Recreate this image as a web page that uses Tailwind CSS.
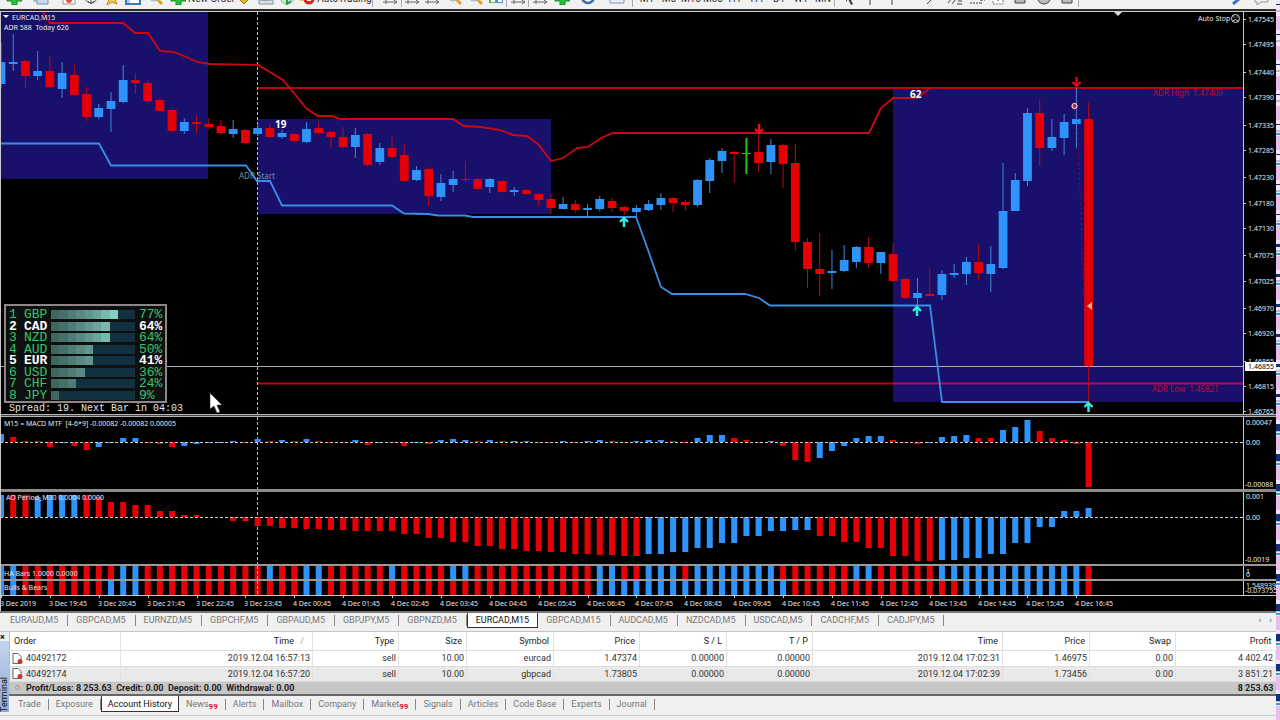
<!DOCTYPE html>
<html lang="en">
  <head>
    <meta charset="UTF-8" />
    <meta name="viewport" content="width=device-width, initial-scale=1.0" />
    <title>EURCAD,M15</title>
    <script src="https://cdn.jsdelivr.net/npm/@tailwindcss/browser@4"></script>
  </head>
  <body class="bg-[#f0f0f0] font-['Roboto','Noto_Sans',sans-serif] text-[9px] leading-3 text-[#333]">
    <div class="flex min-h-screen">
      <div class="flex min-w-0 flex-1 flex-col">
        <!-- toolbar, scrolled so that only its lower edge shows -->
        <header class="flex h-[9px] flex-col justify-end overflow-hidden bg-[#f1f1f2]">
          <div id="toolbar" class="flex h-6 shrink-0 items-center text-[10px] text-[#333]"></div>
        </header>
        <div class="h-[2px] bg-[#2c2c2c]"></div>

        <main class="border-l border-[#c8c8c8] bg-black">
          <section class="flex border-t border-[#c8c8c8]">
            <div class="relative min-w-0 flex-1 border-r border-[#c8c8c8]">
              <svg class="block h-[402px] w-full" role="img" aria-label="EURCAD price chart">
                <g id="price" transform="translate(-1,-12)"></g>
              </svg>
              <div class="absolute top-[292px] left-[3px] w-[163px] border-2 border-[#8e8688] bg-[#0e1010] px-[3px] pt-[3px] font-['Liberation_Mono',monospace] text-[13px] leading-[11px]">
                <div id="strength" class="grid h-[92px] grid-rows-8 items-center"></div>
              </div>
            </div>
            <svg class="block h-[402px] w-8 shrink-0">
              <g id="priceAxis" transform="translate(0,-12)"></g>
            </svg>
          </section>
          <div class="h-[3px] border-y border-[#b4b4b4] bg-[#444]"></div>

          <section class="flex">
            <svg class="block h-[72px] min-w-0 flex-1 border-r border-[#c8c8c8]">
              <g id="macd" transform="translate(-1,-417)"></g>
            </svg>
            <svg class="block h-[72px] w-8 shrink-0">
              <g id="macdAxis" transform="translate(0,-417)"></g>
            </svg>
          </section>
          <div class="h-[3px] bg-[#8c8c8c]"></div>

          <section class="flex">
            <svg class="block h-[72px] min-w-0 flex-1 border-r border-[#c8c8c8]">
              <g id="ao" transform="translate(-1,-492)"></g>
            </svg>
            <svg class="block h-[72px] w-8 shrink-0">
              <g id="aoAxis" transform="translate(0,-492)"></g>
            </svg>
          </section>
          <div class="h-[2px] bg-[#999]"></div>

          <section class="flex">
            <svg class="block h-[13px] min-w-0 flex-1 border-r border-[#c8c8c8]">
              <g id="ha" transform="translate(-1,-566)"></g>
            </svg>
            <svg class="block h-[13px] w-8 shrink-0">
              <g id="haAxis" transform="translate(0,-566)"></g>
            </svg>
          </section>
          <div class="h-[2px] bg-[#999]"></div>

          <section class="flex">
            <svg class="block h-[14px] min-w-0 flex-1 border-r border-[#c8c8c8]">
              <g id="bulls" transform="translate(-1,-581)"></g>
            </svg>
            <svg class="block h-[14px] w-8 shrink-0">
              <g id="bullsAxis" transform="translate(0,-581)"></g>
            </svg>
          </section>
          <svg class="block h-4 w-full">
            <g id="dates" transform="translate(-1,-595)"></g>
          </svg>
        </main>

        <nav class="flex h-[17px] border-t-2 border-[#777] bg-[#f0f0f0] pl-[2px] text-[#777]" aria-label="Charts">
          <div id="chartTabs" class="flex h-[15px] items-center"></div>
          <div class="ml-auto flex items-center gap-2 pr-1 text-[#666]">
            <button aria-label="Scroll left" class="leading-none">‹</button>
            <button aria-label="Scroll right" class="leading-none">›</button>
          </div>
        </nav>
        <div class="h-[4px] border-b border-[#c4c4c4] bg-[#f0f0f0]"></div>

        <section class="flex">
          <div class="flex w-[9px] shrink-0 flex-col bg-[#f0f0f0]">
            <button aria-label="Close terminal" class="h-[9px] text-left text-[9px] leading-[8px] font-bold text-black">×</button>
            <div class="flex flex-1 items-end overflow-hidden bg-linear-to-b from-[#c3d4ec] to-[#8fabd4]">
              <span class="rotate-180 text-[9px] leading-[8px] text-[#111] [writing-mode:vertical-rl]">Terminal</span>
            </div>
          </div>
          <div class="min-w-0 flex-1">
            <table class="w-full table-fixed border-collapse border-l border-[#bbb] bg-white text-right">
              <colgroup>
                <col class="w-[111px]" />
                <col class="w-[192px]" />
                <col class="w-[86px]" />
                <col class="w-[68px]" />
                <col class="w-[87px]" />
                <col class="w-[86px]" />
                <col class="w-[87px]" />
                <col class="w-[86px]" />
                <col class="w-[190px]" />
                <col class="w-[87px]" />
                <col class="w-[86px]" />
                <col />
              </colgroup>
              <thead>
                <tr class="h-[18px] border-b border-[#ddd] text-[#222]">
                  <th class="border-r border-[#e2e2e2] pl-1 text-left font-normal">Order</th>
                  <th class="border-r border-[#e2e2e2] pr-2 font-normal">Time <span class="pl-1 text-[#aaa]">/</span></th>
                  <th class="border-r border-[#e2e2e2] pr-1 font-normal">Type</th>
                  <th class="border-r border-[#e2e2e2] pr-1 font-normal">Size</th>
                  <th class="border-r border-[#e2e2e2] pr-1 font-normal">Symbol</th>
                  <th class="border-r border-[#e2e2e2] pr-1 font-normal">Price</th>
                  <th class="border-r border-[#e2e2e2] pr-1 font-normal">S / L</th>
                  <th class="border-r border-[#e2e2e2] pr-1 font-normal">T / P</th>
                  <th class="border-r border-[#e2e2e2] pr-1 font-normal">Time</th>
                  <th class="border-r border-[#e2e2e2] pr-1 font-normal">Price</th>
                  <th class="border-r border-[#e2e2e2] pr-1 font-normal">Swap</th>
                  <th class="pr-1 font-normal">Profit</th>
                </tr>
              </thead>
              <tbody id="orders"></tbody>
              <tfoot>
                <tr class="h-[14px] border-b-2 border-[#666] bg-[#c6c6c6] font-bold text-[#222]">
                  <td colspan="11" class="text-left">
                    <div class="flex items-center gap-[6px] pl-[5px]">
                      <span class="size-[5px] rounded-full border border-[#999]"></span>
                      <span class="whitespace-pre">Profit/Loss: 8 253.63  Credit: 0.00  Deposit: 0.00  Withdrawal: 0.00</span>
                    </div>
                  </td>
                  <td class="pr-[2px]">8 253.63</td>
                </tr>
              </tfoot>
            </table>
            <nav id="terminalTabs" class="flex h-4 items-center bg-[#f0f0f0] pl-[2px] text-[#777]" aria-label="Terminal"></nav>
          </div>
        </section>
        <footer class="mt-[3px] flex-1 border-t border-[#c8c8c8] bg-[#f0f0f0]"></footer>
      </div>
      <svg class="block w-1 shrink-0 self-stretch bg-[#f3e4f6]" aria-hidden="true">
        <g id="edge"></g>
      </svg>
    </div>

    <script>
      const RED = "#e60006";
      const BLUE = "#2e93fb";
      const STEP = 12.22;
      const x = (i) => 1 + STEP * i;
      const el = (id) => document.getElementById(id);

      const rect = (x, y, w, h, fill) =>
        `<rect x="${x}" y="${y}" width="${w}" height="${h}" fill="${fill}"/>`;
      const line = (x1, y1, x2, y2, color, width = 1, dash = "") =>
        `<line x1="${x1}" y1="${y1}" x2="${x2}" y2="${y2}" stroke="${color}" stroke-width="${width}" stroke-dasharray="${dash}"/>`;
      const label = (x, y, text, fill = "#e8e8e8", size = 7, weight = 400) =>
        `<text x="${x}" y="${y}" fill="${fill}" font-family="Noto Sans, sans-serif" font-size="${size}" font-weight="${weight}" xml:space="preserve">${text}</text>`;
      const dayLine = (y1, y2) => line(257.5, y1, 257.5, y2, "#bbb", 1, "3 2");
      const zeroLine = (y) => line(0, y, 3000, y, "#ccc", 1, "3 2");

      // colour, body top, body bottom, wick top, wick bottom
      const candles = [
        ["b", 62, 84, 43, 88], ["b", 62, 64, 34, 71], ["r", 61, 76, 60, 88],
        ["b", 71, 76, 51, 80], ["r", 71, 87, 56, 88], ["b", 73, 89, 62, 98],
        ["r", 75, 95, 64, 96], ["r", 94, 117, 87, 121], ["b", 108, 117, 104, 119],
        ["b", 101, 109, 92, 132], ["b", 80, 102, 65, 103], ["r", 80, 83, 73, 94],
        ["r", 83, 101, 80, 103], ["r", 100, 111, 98, 112], ["r", 110, 131, 109, 133],
        ["b", 122, 131, 118, 134], ["r", 122, 124, 115, 133], ["r", 124, 127, 118, 129],
        ["r", 126, 133, 120, 135], ["b", 129, 134, 120, 138], ["r", 130, 143, 129, 144],
        ["b", 128, 134, 124, 136], ["r", 128, 137, 123, 138], ["b", 133, 137, 130, 139],
        ["r", 134, 141, 133, 143], ["b", 129, 142, 122, 143], ["r", 128, 133, 121, 135],
        ["r", 132, 137, 131, 148], ["r", 137, 147, 127, 149], ["b", 135, 147, 128, 158],
        ["r", 134, 165, 133, 166], ["b", 148, 162, 143, 165], ["r", 148, 157, 136, 158],
        ["r", 155, 181, 144, 182], ["b", 170, 180, 166, 181], ["r", 169, 196, 167, 206],
        ["b", 183, 197, 174, 201], ["b", 179, 185, 171, 192], ["r", 179, 180, 161, 182],
        ["r", 179, 189, 178, 190], ["b", 179, 187, 178, 193], ["r", 181, 192, 180, 193],
        ["b", 190, 192, 187, 196], ["r", 190, 194, 189, 195], ["r", 194, 200, 193, 206],
        ["r", 199, 208, 194, 214], ["b", 204, 209, 197, 209], ["r", 204, 210, 200, 213],
        ["b", 208, 210, 204, 216], ["b", 199, 209, 196, 211], ["r", 201, 208, 198, 212],
        ["r", 207, 211, 206, 215], ["b", 208, 212, 205, 217], ["b", 204, 210, 200, 211],
        ["b", 198, 205, 193, 210], ["r", 198, 203, 197, 212], ["r", 202, 205, 200, 211],
        ["b", 180, 205, 179, 207], ["b", 160, 181, 158, 193], ["b", 151, 161, 148, 173],
        ["r", 152, 154, 151, 183], ["g", 153, 154, 138, 174], ["r", 152, 163, 134, 172],
        ["b", 145, 162, 139, 174], ["r", 145, 164, 144, 188], ["r", 163, 242, 144, 251],
        ["r", 242, 269, 238, 288], ["r", 269, 274, 233, 296], ["b", 271, 273, 250, 289],
        ["b", 260, 271, 245, 272], ["b", 247, 262, 246, 268], ["r", 247, 263, 237, 268],
        ["b", 252, 263, 252, 274], ["r", 254, 281, 243, 282], ["r", 279, 298, 278, 299],
        ["b", 293, 298, 278, 305], ["r", 294, 296, 268, 296], ["b", 274, 295, 270, 300],
        ["b", 273, 275, 264, 278], ["b", 262, 274, 257, 285], ["r", 262, 273, 244, 280],
        ["b", 264, 274, 246, 292], ["b", 211, 268, 163, 269], ["b", 180, 211, 173, 211],
        ["b", 113, 181, 108, 186], ["r", 113, 148, 99, 166], ["b", 137, 148, 119, 151],
        ["b", 122, 138, 114, 155], ["b", 119, 124, 88, 148], ["r", 119, 366, 103, 402],
      ];
      const tone = { r: RED, b: BLUE, g: "#1fc21f" };

      const upper =
        "43,12 50,23 123,23 135,33 148,33 160,51 173,52 184,56 197,62 210,64 258,65 283,80 307,109 318,116 331,116 341,119 453,119 464,126 481,127 500,130 513,135 527,136 538,144 551,161 563,158 577,148 588,147 601,138 613,133 869,133 881,108 893,98 917,98 930,88";
      const lower =
        "1,143.5 99,143.5 111,165.5 246,165.5 257,181 270,181 282,205.5 392,205.5 404,213.5 428,214 438,215.5 465,215.5 473,217 636,217 648,250 661,287 672,294 745,294 759,298 770,305.5 930,305.5 942,402 1089,402";

      const arrow = (cx, tip, dir, color) =>
        `<path d="M${cx} ${tip + dir * 10}V${tip + dir}M${cx - 4} ${tip + dir * 5}L${cx} ${tip + dir}L${cx + 4} ${tip + dir * 5}" stroke="${color}" stroke-width="2.4" fill="none"/>`;

      function drawPrice() {
        let out =
          rect(1, 12, 207, 167, "#18106a") +
          rect(258, 119, 293, 95, "#18106a") +
          rect(893, 87, 2000, 315, "#18106a") +
          dayLine(12, 414) +
          line(0, 366.5, 3000, 366.5, "#a9a9b4") +
          line(258, 88, 3000, 88, "#c00010", 2) +
          line(258, 383.5, 893, 383.5, "#c00010", 2) +
          line(893, 383.5, 3000, 383.5, "#b8085c", 2) +
          `<polyline points="${upper}" fill="none" stroke="#cc0810" stroke-width="1.8"/>` +
          `<polyline points="${lower}" fill="none" stroke="#3a8ee6" stroke-width="1.8"/>`;
        candles.forEach(([c, top, bottom, high, low], i) => {
          const wick = c === "g" ? tone.g : c === "r" ? "#b80a14" : "#3f88d8";
          out += line(x(i), high, x(i), low, wick, c === "g" ? 2 : 1);
          out += rect(x(i) - 4.4, top, 8.8, bottom - top, tone[c]);
        });
        out += line(1077, 108, 1084, 300, "#701050", 1, "2 3");
        out += arrow(759, 134, -1, "#f01018") + arrow(1076.5, 87, -1, "#e00a14");
        out += arrow(624, 217, 1, "#30f0dc") + arrow(917, 306, 1, "#30f0dc") + arrow(1088.5, 402, 1, "#30f0dc");
        out += `<circle cx="1074.500" cy="106" r="2.600" fill="#c02040" stroke="#fff"/>`;
        out += `<path d="M1087 306l5-4v8z" fill="#f0b090"/>`;
        out += `<path d="M1114 12h8l-4 4z" fill="#ddd"/>`;
        out += `<path d="M3 15h6l-3 3z" fill="#fff"/>`;
        out += label(12, 20, "EURCAD,M15") + label(4, 30, "ADR 588  Today 626");
        out += label(239, 179, "ADR Start", "#6d9a96", 8);
        out += label(275, 128, "19", "#fff", 10, 700) + label(910, 98, "62", "#fff", 10, 700);
        out += label(1153, 96, "ADR High  1.47409", "#c00a30", 8) + label(1152, 392, "ADR Low  1.46821", "#c00a30", 8);
        out += label(1198, 21, "Auto Stop");
        out += `<g fill="none" stroke="#ddd"><circle cx="1235.500" cy="18.500" r="4"/><path d="M1233 21q2.500-3 5 0M1233.500 17h1M1236.500 17h1"/></g>`;
        out += `<text x="9" y="411" fill="#e4e4e4" font-family="Liberation Mono, monospace" font-size="10">Spread: 19. Next Bar in 04:03</text>`;
        out += `<path d="M210 393v16l4-3 3 7 3-1-3-7h5z" fill="#fff" stroke="#222" stroke-width=".5"/>`;
        el("price").innerHTML = out;
      }

      const prices = [
        [19, "1.47545"], [44, "1.47495"], [72, "1.47440"], [97, "1.47390"],
        [125, "1.47335"], [150, "1.47285"], [177, "1.47230"], [203, "1.47180"],
        [228, "1.47130"], [255, "1.47075"], [281, "1.47025"], [308, "1.46970"],
        [333, "1.46920"], [361, "1.46865"], [386, "1.46815"], [411, "1.46765"],
      ];

      function drawPriceAxis() {
        el("priceAxis").innerHTML =
          prices.map(([y, t]) => line(0, y + 0.5, 2, y + 0.5, "#ccc") + label(4, y + 3, t)).join("") +
          rect(1, 362, 31, 9, "#fff") +
          label(4, 369, "1.46855", "#000");
      }

      // height above (+) or below (-) the zero line
      const macd = [
        "b8", "r5", "r1", "r1", "r-5", "b-1", "r-4", "r-8", "b-5", "b-1", "b4", "b4",
        "r-1", "r-2", "r-5", "b-4", "b-2", "b-1", "b-1", "b1", "r-1", "b3", "r1", "b2",
        "r1", "b3", "r1", "r-1", "r-1", "b2", "r-3", "b-1", "r-1", "r-4", "b-1", "r-2",
        "b2", "b3", "b2", "r1", "b2", "r1", "b1", "b1", "r-1", "r-1", "b1", "r-1",
        "b1", "b2", "r1", "r-1", "b1", "b2", "b2", "r1", "r-1", "b4", "b7", "b7",
        "r4", "r2", "r-1", "b1", "r-4", "r-18", "r-20", "b-16", "b-9", "b-4", "b4", "b6",
        "b6", "r2", "r-1", "r-2", "b-1", "b5", "b6", "b7", "r4", "r4", "b12", "b15",
        "b22", "r11", "r4", "r2", "r-2", "r-45",
      ];
      const ao = [
        "b22", "r22", "r22", "b20", "b22", "b22", "b22", "r22", "r20", "r15", "r15", "r12",
        "r12", "r6", "r6", "r2", "r2", "r0", "r0", "r-4", "r-4", "r-9", "r-9", "r-11",
        "r-11", "r-12", "r-12", "r-13", "r-13", "r-14", "r-14", "r-14", "r-14", "r-17", "r-17", "r-21",
        "r-21", "r-25", "r-25", "r-29", "r-29", "r-32", "r-32", "r-34", "r-34", "r-35", "r-35", "r-37",
        "r-37", "r-38", "r-38", "r-39", "r-39", "b-37", "b-37", "b-35", "b-35", "b-31", "b-31", "b-26",
        "b-26", "b-19", "b-19", "b-14", "b-14", "b-13", "b-13", "r-19", "r-19", "r-25", "r-25", "r-31",
        "r-31", "r-39", "r-39", "r-44", "r-44", "b-43", "b-43", "b-41", "b-41", "b-37", "b-37", "b-26",
        "b-26", "b-10", "b-10", "b6", "b6", "b9",
      ];
      const bars = (data, zero) =>
        data
          .map((d, i) => {
            const h = Number(d.slice(1));
            return rect(x(i) - 3, h > 0 ? zero - h : zero, 6, Math.abs(h), tone[d[0]]);
          })
          .join("");
      const blocks = (runs, y, h) =>
        [...runs].map((c, i) => rect(x(i) - 3, y, 6, h, tone[c])).join("");

      const ha =
        "bb" + "r".repeat(8) + "bb" + "r".repeat(10) + "brrbb" + "r".repeat(5) + "brrrrbb" +
        "r".repeat(10) + "bbrrbbbr" + "b".repeat(7) + "r".repeat(6) + "bb" + "r".repeat(5) +
        "b".repeat(12) + "r";
      const bulls =
        "bb" + "r".repeat(7) + "bbb" + "r".repeat(13) + "bb" + "r".repeat(22) +
        "b".repeat(16) + "r".repeat(14) + "b".repeat(10) + "r";

      function drawIndicators() {
        el("macd").innerHTML =
          dayLine(417, 489) + bars(macd, 442) + zeroLine(442.5) +
          label(4, 426, "M15 = MACD MTF  [4-6*9] -0.00082 -0.00082 0.00005");
        el("macdAxis").innerHTML =
          label(2, 425, "0.00047") + label(2, 445, "0.00") + label(1, 487, "-0.00088");
        el("ao").innerHTML =
          dayLine(492, 564) + bars(ao, 517) + zeroLine(517.5) +
          label(6, 500, "AO Period_M30 0.0004 0.0000");
        el("aoAxis").innerHTML =
          label(2, 499, "0.001") + label(2, 520, "0.00") + label(1, 562, "-0.0019");
        el("ha").innerHTML = blocks(ha, 566, 13) + dayLine(566, 579) + label(4, 576, "HA Bars 1.0000 0.0000");
        el("haAxis").innerHTML = label(2, 574, "1") + label(2, 577, "0");
        el("bulls").innerHTML = blocks(bulls, 581, 14) + dayLine(581, 595) + label(4, 590, "Bulls &amp; Bears");
        el("bullsAxis").innerHTML = label(2, 588, "1.548939") + label(1, 593, "-0.073755");
      }

      function drawDates() {
        const hours = ["2019"];
        for (let i = 1; i < 23; i++) hours.push(String((18 + i) % 24).padStart(2, "0") + ":45");
        el("dates").innerHTML =
          line(0, 595.5, 3000, 595.5, "#c8c8c8") +
          hours
            .map((t, i) => {
              const left = Math.round(i * STEP * 4);
              return line(left + 1.5, 596, left + 1.5, 598, "#ccc") + label(left, 606, `${i < 6 ? 3 : 4} Dec ${t}`);
            })
            .join("");
      }

      const strength = [
        ["GBP", 77, 8], ["CAD", 64, 7], ["NZD", 64, 7], ["AUD", 50, 5],
        ["EUR", 41, 5], ["USD", 36, 4], ["CHF", 24, 3], ["JPY", 9, 1],
      ];
      const shades = ["#3f6660", "#46706a", "#4f7d76", "#588982", "#61968e", "#6aa59b", "#76b8ac", "#84d0c2"];

      function drawStrength() {
        el("strength").innerHTML = strength
          .map(([name, value, cells], i) => {
            const color = name === "CAD" || name === "EUR" ? "text-white font-bold" : "text-[#35c46c]";
            const fill = Array.from({ length: 10 }, (_, n) =>
              `<span class="h-[9px] flex-1" style="background:${n < cells ? shades[n] : "#12303f"}"></span>`
            ).join("");
            return `<div class="flex items-center ${color}">
              <span class="w-[15px]">${i + 1}</span>
              <span class="w-[27px]">${name}</span>
              <span class="flex w-[84px]">${fill}</span>
              <span class="pl-1">${value}%</span>
            </div>`;
          })
          .join("");
      }

      const icons = {
        plus: '<path d="M6 2h5v5h5v5h-5v4H6v-4H1V7h5z" fill="#2fbf3a" stroke="#138a20"/>',
        pages: '<path d="M1 3h11v9H1z" fill="#dce8f4" stroke="#7a93ad"/><path d="M4 6h11v9H4z" fill="#c6daf0" stroke="#7a93ad"/>',
        doc: '<path d="M2 1h12v14H2z" fill="#fff" stroke="#999"/><circle cx="8" cy="11" r="3" fill="#e25540"/>',
        cross: '<circle cx="8" cy="8" r="6" fill="none" stroke="#555"/><path d="M8 4v11M5 12l3 3 3-3" fill="none" stroke="#555"/>',
        star: '<path d="M8 1l2 5 5 1-4 3 2 5-5-2-5 3 2-6-4-3h5z" fill="#f5ca4c" stroke="#b98b20"/>',
        panel: '<path d="M1 1h14v14H1z" fill="#fff" stroke="#3a7ac0" stroke-width="2"/><path d="M2 3h3v11H2z" fill="#a8cbee"/>',
        lens: '<path d="M10 10l5 5" stroke="#d8a830" stroke-width="3"/><circle cx="7" cy="7" r="5" fill="#e2eef8" stroke="#9ab"/>',
        gold: '<path d="M1 8l7-6 7 6-7 7z" fill="#e2b437" stroke="#8f6d14"/>',
        house: '<path d="M4 3h8v8H4zM1 11h14v4H1z" fill="#d7dde4" stroke="#8a949e"/>',
        signal: '<circle cx="8" cy="8" r="7" fill="#cfe9d3" stroke="#7cc08a"/><path d="M8 7v8l4-3" fill="none" stroke="#2c9c44" stroke-width="2"/>',
        auto: '<path d="M1 4h10v8H1z" fill="#f0c43e"/><circle cx="10" cy="10" r="5.500" fill="#d8261c"/><path d="M8 8h4v4H8z" fill="#fff"/>',
        axes: '<path d="M4 1v14M1 13h14M12 11l3 2-3 2M8 5v6M11 3v8" fill="none" stroke="#666"/>',
        grid: '<path d="M1 2h14v12H1z" fill="#4a90d8"/><path d="M8 2h7v6H8zM1 8h7v6H1z" fill="#5cb850"/><path d="M3 10h4v3H3zM10 10h4v3h-4z" fill="#fff"/>',
        clock: '<circle cx="8" cy="8" r="6" fill="#fff" stroke="#3b6ea8" stroke-width="2.500"/>',
        frame: '<path d="M1 2h14v12H1z" fill="#e4eef8" stroke="#8a98a8"/><path d="M3 11l4-3 3 3 3-4" fill="none" stroke="#68a"/>',
        cursor: '<path d="M5 1l7 8H9l3 6-2 1-3-6-2 3z" fill="#444"/>',
        vline: '<path d="M8 1v15" stroke="#444"/>',
        hline: '<path d="M1 7h14" stroke="#444"/>',
        slope: '<path d="M2 15L14 3" stroke="#444"/>',
        channel: '<path d="M1 14L9 4M5 15l8-10M10 15h5M11 12h4" stroke="#444" fill="none"/>',
        fibo: '<path d="M1 14h10M12 10v6M12 11h4" stroke="#444" stroke-dasharray="2 1" fill="none"/>',
        text: '<path d="M3 3h10v12H3z" fill="#fff" stroke="#777" stroke-dasharray="2 1"/><path d="M8 6v6" stroke="#444"/>',
        box: '<path d="M3 6h10v8H3z" fill="#bbb" stroke="#444"/>',
        oval: '<ellipse cx="8" cy="10" rx="6" ry="5" fill="#bbb" stroke="#444"/>',
        pen: '<path d="M2 15L14 5" stroke="#4a6fc0" stroke-width="3"/>',
        chat: '<path d="M2 5h13v8H8l-4 3v-3H2z" fill="#eee" stroke="#999"/>',
      };
      // cell width, icon name ("" for a divider, null for a gap), name, caption shown
      const tools = [
        [27, "plus", "New Chart"], [28, "pages", "Profiles"], [28, "doc", "Market Watch"],
        [16, "cross", "Data Window"], [26, "star", "Navigator"], [16, "panel", "Terminal Window"],
        [28, "lens", "Strategy Tester"], [67, "plus", "New Order", true], [16, "gold", "MetaEditor"],
        [28, "house", "Options"], [14, "signal", "Signals"], [5, null], [73, "auto", "AutoTrading", true], [7, ""],
        [22, "axes", "Bar Chart"], [1, ""], [19, "axes", "Candlesticks"], [22, "axes", "Line Chart"],
        [21, "lens", "Zoom In"], [22, "lens", "Zoom Out"], [20, "grid", "Tile Windows"], [2, ""],
        [20, "axes", "Auto Scroll"], [1, ""], [21, "axes", "Chart Shift"], [24, "plus", "Indicators"],
        [28, "clock", "Periods"], [30, "frame", "Templates"], [4, ""],
      ];
      const periods = ["M1", "M5", "M15", "M30", "H1", "H4", "D1", "W1", "MN"];
      const drawing = [
        [4, ""], [21, "cursor", "Cursor"], [22, "vline", "Crosshair"], [22, "vline", "Vertical Line"],
        [19, "hline", "Horizontal Line"], [22, "slope", "Trendline"], [22, "channel", "Channel"],
        [22, "fibo", "Fibonacci"], [20, "text", "Text"],
        [24, "box", "Rectangle"], [24, "oval", "Ellipse"], [22, "box", "Arrows"], [3, ""],
      ];

      const tool = ([w, icon, name, caption]) =>
        icon
          ? `<button aria-label="${name}" class="flex h-6 shrink-0 items-center justify-center gap-[2px] whitespace-nowrap" style="width:${w}px"><svg class="size-4 shrink-0" viewBox="0 0 16 16">${icons[icon]}</svg>${caption ? `<span class="pt-1">${name}</span>` : ""}</button>`
          : `<span class="h-5 shrink-0 ${icon === "" ? "border-l border-[#aaa]" : ""}" style="width:${w}px"></span>`;

      function drawToolbar() {
        el("toolbar").innerHTML =
          tools.map(tool).join("") +
          periods.map((p) => `<button class="w-[22px] shrink-0 pt-1 text-center">${p}</button>`).join("") +
          drawing.map(tool).join("") +
          `<span class="ml-auto flex pr-1">${tool([22, "pen", "Edit"])}${tool([22, "chat", "Messages"])}</span>`;
      }

      const chartTabs = [
        "EURAUD,M5", "GBPCAD,M5", "EURNZD,M5", "GBPCHF,M5", "GBPAUD,M5", "GBPJPY,M5", "GBPNZD,M5",
        "EURCAD,M15", "GBPCAD,M15", "AUDCAD,M5", "NZDCAD,M5", "USDCAD,M5", "CADCHF,M5", "CADJPY,M5",
      ];
      const terminalTabs = [
        "Trade", "Exposure", "Account History", "News", "Alerts", "Mailbox", "Company",
        "Market", "Signals", "Articles", "Code Base", "Experts", "Journal",
      ];

      function drawTabs() {
        el("chartTabs").innerHTML = chartTabs
          .map((t) =>
            t === "EURCAD,M15"
              ? `<a href="#" class="h-[15px] border border-t-0 border-[#333] bg-white px-2 leading-[14px] text-[#111]">${t}</a>`
              : `<a href="#" class="h-[11px] border-r border-[#888] pr-[9px] pl-2 leading-[11px]">${t}</a>`
          )
          .join("");
        el("terminalTabs").innerHTML = terminalTabs
          .map((t) => {
            const badge =
              t === "News" || t === "Market"
                ? '<sub class="text-[8px] font-bold text-[#d8143c]">99</sub>'
                : "";
            return t === "Account History"
              ? `<a href="#" class="h-4 border border-t-0 border-[#333] bg-white px-[6px] leading-4 text-[#111]">${t}</a>`
              : `<a href="#" class="h-[11px] border-r border-[#888] px-[7px] leading-[11px]">${t}${badge}</a>`;
          })
          .join("");
      }

      const orders = [
        ["40492172", "2019.12.04 16:57:13", "sell", "10.00", "eurcad", "1.47374", "0.00000", "0.00000", "2019.12.04 17:02:31", "1.46975", "0.00", "4 402.42"],
        ["40492174", "2019.12.04 16:57:20", "sell", "10.00", "gbpcad", "1.73805", "0.00000", "0.00000", "2019.12.04 17:02:39", "1.73456", "0.00", "3 851.21"],
      ];
      const orderIcon =
        '<svg class="h-[11px] w-[11px]" viewBox="0 0 11 11"><path d="M1 .5h5l3 3v7H1z" fill="#fff" stroke="#666"/><circle cx="8" cy="8.500" r="2.500" fill="#c8382a"/></svg>';

      function drawOrders() {
        el("orders").innerHTML = orders
          .map(
            (row, i) =>
              `<tr class="border-b border-[#ddd] ${i ? "h-[15px] bg-[#e9e9e9]" : "h-4"}">` +
              row
                .map((cell, n) =>
                  n === 0
                    ? `<td class="border-r border-[#e2e2e2] text-left"><div class="flex items-center gap-[3px] pl-[2px]">${orderIcon}${cell}</div></td>`
                    : `<td class="border-r border-[#e2e2e2] pr-[2px]">${cell}</td>`
                )
                .join("") +
              "</tr>"
          )
          .join("");
      }

      function drawEdge() {
        let out = "";
        for (let y = 4; y < 2000; y += 30) {
          out += rect(0, y + 12, 4, 14, "#e9bdec") + line(0, y + 7, 4, y + 7, "#8a8ab0");
          out += rect(0, y, 4, y < 230 ? 1 : y < 420 ? 3 : 7, "#15307a");
          if (y > 100) out += rect(0, y + 9, 4, 2, "#2aa0dc");
        }
        el("edge").innerHTML = out;
      }

      drawToolbar();
      drawPrice();
      drawPriceAxis();
      drawIndicators();
      drawDates();
      drawStrength();
      drawTabs();
      drawOrders();
      drawEdge();
    </script>
  </body>
</html>
